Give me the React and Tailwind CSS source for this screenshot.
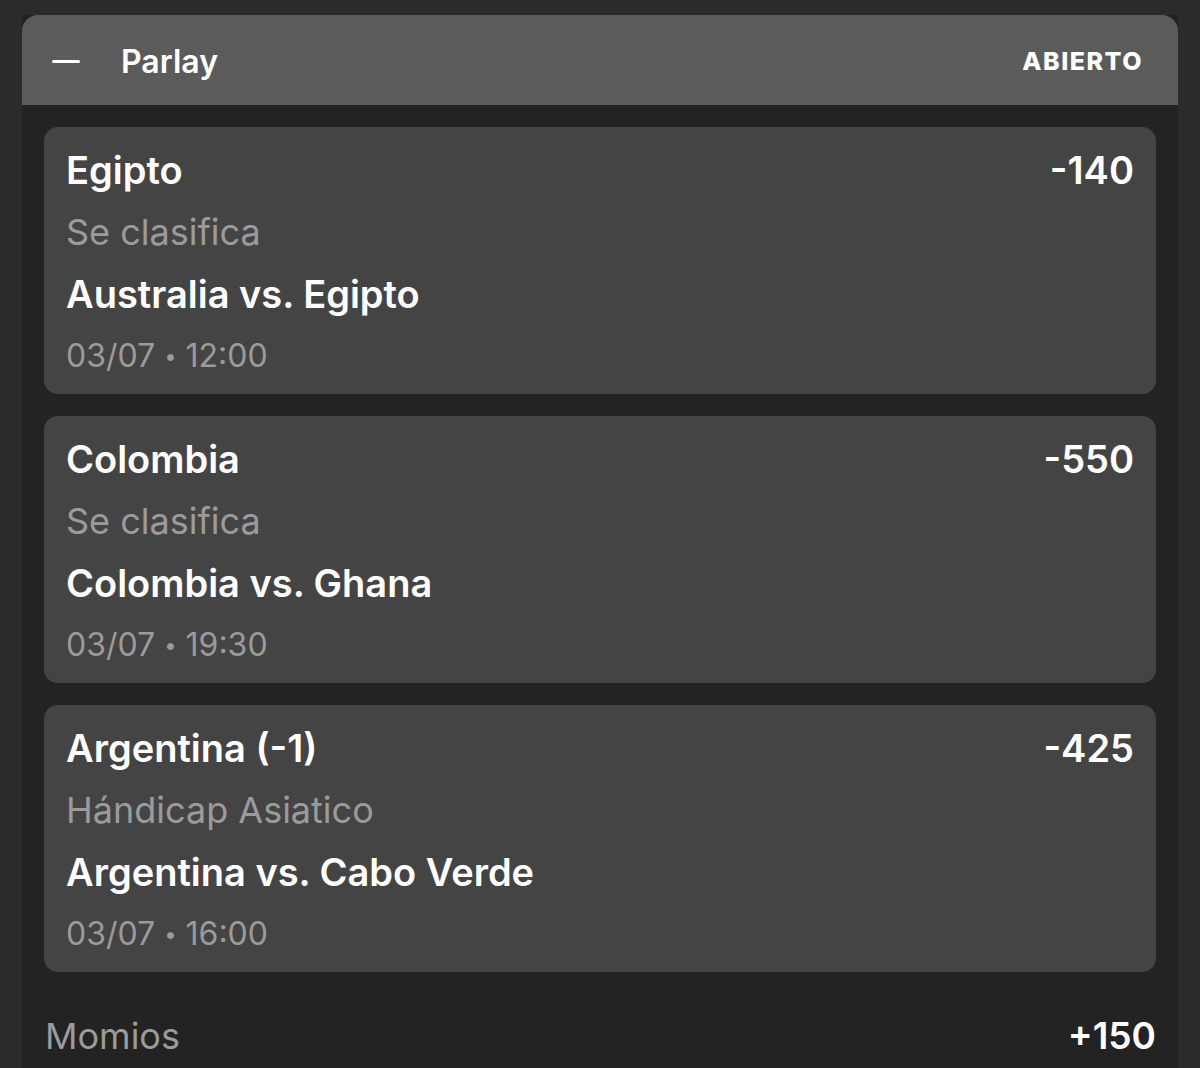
const legs = [
  { pick: "Egipto", odds: "-140", market: "Se clasifica", match: "Australia vs. Egipto", day: "03/07", time: "12:00" },
  { pick: "Colombia", odds: "-550", market: "Se clasifica", match: "Colombia vs. Ghana", day: "03/07", time: "19:30" },
  { pick: "Argentina (-1)", odds: "-425", market: "Hándicap Asiatico", match: "Argentina vs. Cabo Verde", day: "03/07", time: "16:00" },
];

function Leg({ leg }) {
  return (
    <div className="rounded-[14px] bg-[#454445] px-[22px] pt-[12px] pb-[7px]">
      <div className="flex items-center justify-between h-[62px] text-[38px] font-semibold text-white">
        <span>{leg.pick}</span>
        <span>{leg.odds}</span>
      </div>
      <div className="flex items-center h-[62px] text-[36px] text-[#9b9b9b]">{leg.market}</div>
      <div className="flex items-center h-[62px] text-[38px] font-semibold text-white">{leg.match}</div>
      <div className="flex items-center h-[62px] text-[32px] text-[#9b9b9b]">
        {leg.day}
        <span className="mx-[9px] text-[22px]">•</span>
        {leg.time}
      </div>
    </div>
  );
}

export default function App() {
  return (
    <div className="min-h-screen bg-[#2b2b2b] pt-[15px] px-[22px] font-['Inter',sans-serif]">
      <div className="bg-[#232323] min-h-[1053px]">
        <div className="flex items-center justify-between h-[90px] rounded-t-[16px] bg-[#5b5b5b] pt-[3px] pl-[30px] pr-[35px]">
          <div className="flex items-center">
            <div className="w-[28px] h-[3px] rounded-full bg-white" />
            <span className="ml-[41px] text-[32px] font-semibold text-white">Parlay</span>
          </div>
          <span className="text-[25px] font-extrabold tracking-[0.06em] text-white">ABIERTO</span>
        </div>
        <div className="flex flex-col gap-[22px] px-[22px] pt-[22px]">
          {legs.map((leg) => (
            <Leg key={leg.match} leg={leg} />
          ))}
        </div>
        <div className="flex items-center justify-between h-[80px] mt-[24px] pl-[23px] pr-[22px]">
          <span className="text-[36px] text-[#9b9b9b]">Momios</span>
          <span className="text-[37px] font-semibold text-white">+150</span>
        </div>
      </div>
    </div>
  );
}
